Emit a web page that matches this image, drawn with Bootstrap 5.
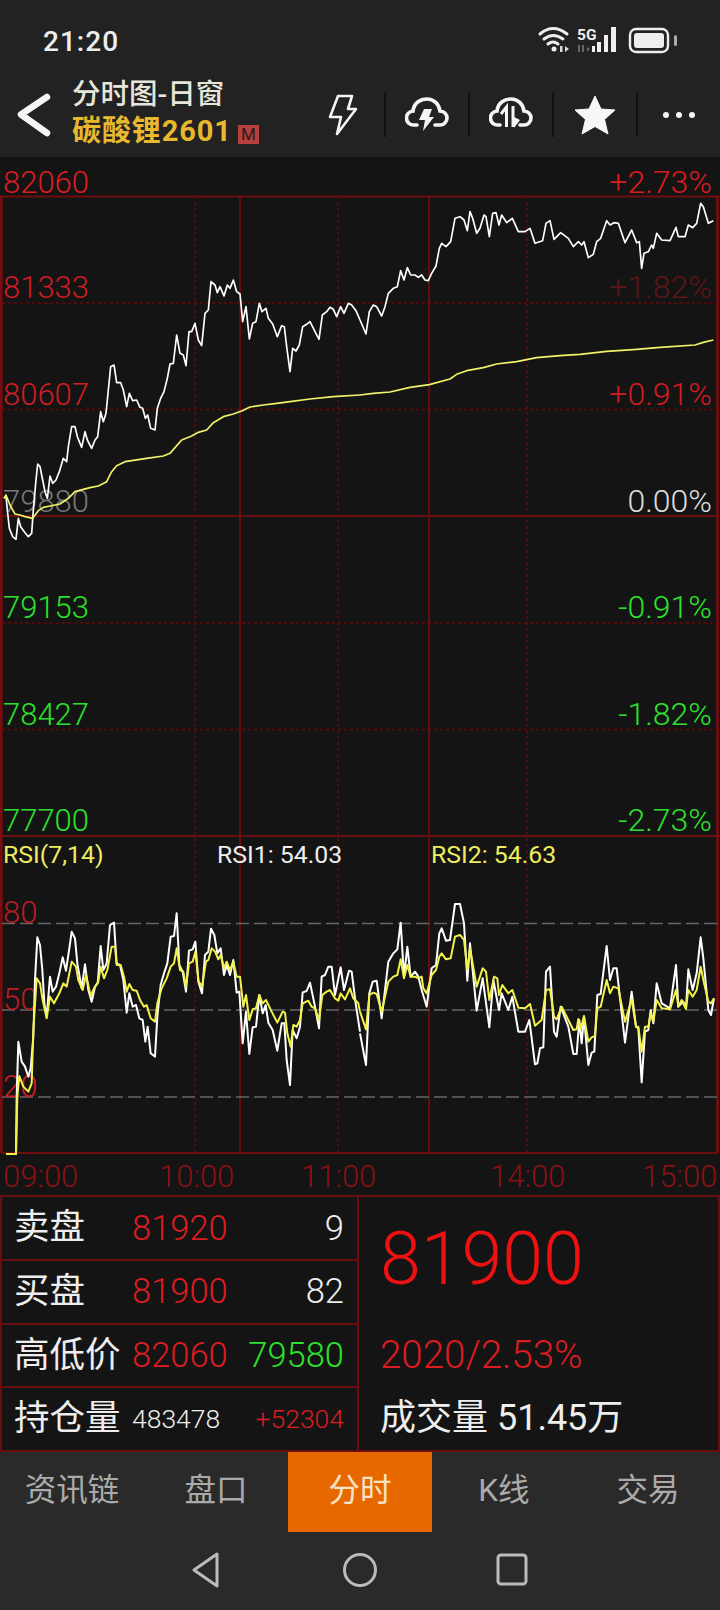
<!doctype html>
<html lang="zh">
<head>
<meta charset="utf-8">
<title>分时图</title>
<link href="https://cdn.jsdelivr.net/npm/bootstrap@5.3.0/dist/css/bootstrap.min.css" rel="stylesheet">
<style>
body{background:#222;width:720px;height:1610px;overflow:hidden;font-family:Roboto,"Noto Sans CJK SC",sans-serif;color:#eee}
.status-strip{height:72px;background:#222;padding:0 40px 0 43px}
.clock{font-size:28px;font-weight:500;letter-spacing:1px;color:#eee;margin-top:12px}
.head-strip{height:85px;background:#222}
.back-box{width:72px}
.title-one{font-size:28.5px;line-height:36px;color:#e6e6dc;font-weight:500;white-space:nowrap}
.title-two{font-size:29px;line-height:36px;color:#e8b92e;font-weight:700;white-space:nowrap;letter-spacing:.9px}
.mkt-tag{display:inline-block;width:21px;height:19px;background:#b5403f;color:#2a1a1a;font-size:17px;line-height:19px;text-align:center;font-weight:400;margin-left:6px;vertical-align:1px;letter-spacing:0}
.tool-cell{width:84px;height:45px}
.tool-end{width:82px}
.tool-sep{border-right:2px solid #111}
.chart-box{display:block;background:#141414}
.lbl{font-family:Roboto,sans-serif;font-size:31px;font-weight:350}
.lbl-r{font-size:32px}
.lbl-s{font-family:Roboto,sans-serif;font-size:24.8px;font-weight:400}
.quote{height:257px;background:#141414;border:2px solid #6b0d0f}
.quote-left{width:357px;border-right:2px solid #6b0d0f}
.q-row{flex:1 1 0;padding:0 13px 0 12px;border-bottom:2px solid #6b0d0f}
.q-row:last-child{border-bottom:0}
.q-name{width:118px;font-size:35.5px;line-height:1;color:#eee;white-space:nowrap;font-weight:400}
.q-num{font-size:34.5px;font-weight:350;line-height:1}
.q-tiny{font-size:26.5px;font-weight:350;line-height:1}
.tone-up{color:#dc1c20}
.tone-down{color:#2de02d}
.tone-plain{color:#eee}
.quote-right{padding-left:21px}
.big-row{height:127px}
.big-price{font-size:73.5px;line-height:1;color:#ee1111;font-weight:350}
.mid-row{height:64px}
.mid-change{font-size:38.5px;line-height:1;color:#dc1c20;font-weight:350}
.mid-vol{font-size:36px;line-height:1;color:#eee;font-weight:400}
.tab-strip{height:80px;background:#2a2a2a}
.tab-cell{width:144px;font-size:31.5px;color:#aaa;padding-bottom:3px}
.tab-on{background:#e86800;color:#f6e3c6}
.sys-strip{height:78px;background:#2a2a2a;padding-bottom:2px}
.sys-cell{width:154px}
.sys-square{margin-right:4px}
</style>
</head>
<body>
<div class="d-flex flex-column">
  <div class="status-strip d-flex align-items-center justify-content-between">
    <div class="clock">21:20</div>
    <svg width="150" height="40" viewBox="530 22 150 40" class="mt-2" aria-hidden="true">
      <g fill="none" stroke="#eee" stroke-width="3" stroke-linecap="round">
        <path d="M540,36 Q553,25 567,36"/><path d="M544,41 Q553,34 563,41"/><path d="M548,46 Q553,42 558,46"/>
      </g>
      <circle cx="554" cy="51" r="2.5" fill="#eee"/>
      <path d="M560,48h2.5v6H560zM565,48l4,3-4,3z" fill="#ddd"/>
      <text x="577" y="42" fill="#eee" style="font:700 15.5px Roboto,sans-serif">5G</text>
      <path d="M578,47h2v7h-2zM582,47h2v7h-2zM587,49l3,2-3,3z" fill="#666"/>
      <path d="M592,48h3v6h-3zM597,44h4v10h-4zM604,37h4v17h-4zM611,29h5v25h-5z" fill="#eee"/>
      <rect x="630" y="31" width="38" height="23" rx="6" fill="none" stroke="#eee" stroke-width="2.4"/>
      <rect x="634" y="35" width="30" height="15" rx="3" fill="#eee"/>
      <rect x="674" y="37" width="3" height="11" rx="1.5" fill="#aaa"/>
    </svg>
  </div>

  <div class="head-strip d-flex align-items-center">
    <div class="back-box d-flex justify-content-center">
      <svg width="40" height="46" viewBox="0 0 40 46" class="me-1" aria-hidden="true"><path d="M33,5 L7,22.5 L33,41" fill="none" stroke="#f5f5f5" stroke-width="6.5" stroke-linecap="round" stroke-linejoin="round"/></svg>
    </div>
    <div class="flex-grow-1 mb-1">
      <div class="title-one">分时图-日窗</div>
      <div class="title-two">碳酸锂2601<span class="mkt-tag">M</span></div>
    </div>
    <div class="d-flex align-items-center">
      <div class="tool-cell tool-sep d-flex align-items-center justify-content-center">
        <svg width="30" height="42" viewBox="0 0 30 42" aria-hidden="true"><path d="M10,2 H24 L20,15 H28 L9,40 L13,23 H2 Z" fill="none" stroke="#f5f5f5" stroke-width="2.6" stroke-linejoin="round"/></svg>
      </div>
      <div class="tool-cell tool-sep d-flex align-items-center justify-content-center">
        <svg width="44" height="38" viewBox="0 0 44 38" aria-hidden="true"><path d="M12,29 H9 a7,7 0 0 1 -1,-14 C9,7 15,3 22,3 C29,3 34,8 35,15 a7,7 0 0 1 0,14 H30" fill="none" stroke="#f5f5f5" stroke-width="3.6" stroke-linecap="round"/><path d="M19,13 H27 L24,21 H29 L18,35 L20,24 H14 Z" fill="#f5f5f5"/></svg>
      </div>
      <div class="tool-cell tool-sep d-flex align-items-center justify-content-center">
        <svg width="44" height="38" viewBox="0 0 44 38" aria-hidden="true"><path d="M11,29 H9 a7,7 0 0 1 -1,-14 C9,7 15,3 22,3 C29,3 34,8 35,15 a7,7 0 0 1 0,14 H31" fill="none" stroke="#f5f5f5" stroke-width="3.6" stroke-linecap="round"/><path d="M17.5,31 V11 L12,18 M24,10 V31" fill="none" stroke="#f5f5f5" stroke-width="3"/><path d="M25,21 L31,24 L25,32 Z" fill="#f5f5f5"/></svg>
      </div>
      <div class="tool-cell tool-sep d-flex align-items-center justify-content-center">
        <svg width="44" height="42" viewBox="0 0 44 42" aria-hidden="true"><path d="M22,2 L28,15 L42,16 L31.5,25.5 L35,40 L22,32.5 L9,40 L12.5,25.5 L2,16 L16,15 Z" fill="#f7f7f7" stroke="#f7f7f7" stroke-linejoin="round"/></svg>
      </div>
      <div class="tool-cell tool-end d-flex align-items-center justify-content-center gap-2">
        <svg width="34" height="8" viewBox="0 0 34 8" aria-hidden="true"><circle cx="4" cy="4" r="3" fill="#f5f5f5"/><circle cx="17" cy="4" r="3" fill="#f5f5f5"/><circle cx="30" cy="4" r="3" fill="#f5f5f5"/></svg>
      </div>
    </div>
  </div>

  <svg class="chart-box" width="720" height="1038" viewBox="0 157 720 1038" role="img" aria-label="分时图">
    <g stroke="#5c0c0e" stroke-width="1.5" stroke-dasharray="3 3" fill="none">
      <path d="M2,303H717M2,409.5H717M2,623H717M2,729.5H717M195,196V1153M338,196V1153M527,196V1153"/>
    </g>
    <g stroke="#6f0c0f" stroke-width="1.8" fill="none">
      <path d="M0,196.5H720M2,516H717M0,836H720M2,1153H717M240,196V1153M429,196V1153"/>
    </g>
    <path d="M1.3,196V1153M717.5,196V1153" stroke="#7a0c10" stroke-width="2.6" fill="none"/>
    <path d="M2,923.5H717M2,1010H717M2,1097H717" stroke="#666" stroke-width="1.4" stroke-dasharray="13 5" fill="none"/>

    <g class="lbl">
      <text x="3" y="193" fill="#dc1c20">82060</text>
      <text x="3" y="298" fill="#d01c22">81333</text>
      <text x="3" y="405" fill="#d01c22">80607</text>
      <text x="3" y="512" fill="#777">79880</text>
      <text x="3" y="618" fill="#2de02d">79153</text>
      <text x="3" y="725" fill="#2de02d">78427</text>
      <text x="3" y="831" fill="#2de02d">77700</text>
      <g text-anchor="end" class="lbl-r">
        <text x="712" y="193" fill="#dc1c20">+2.73%</text>
        <text x="712" y="298" fill="#5e1518">+1.82%</text>
        <text x="712" y="405" fill="#d01c22">+0.91%</text>
        <text x="712" y="512" fill="#ddd">0.00%</text>
        <text x="712" y="618" fill="#2de02d">-0.91%</text>
        <text x="712" y="725" fill="#2de02d">-1.82%</text>
        <text x="712" y="831" fill="#2de02d">-2.73%</text>
      </g>
      <text x="3" y="923" fill="#b81c22">80</text>
      <text x="3" y="1010" fill="#b81c22">50</text>
      <text x="3" y="1097" fill="#d01c22">20</text>
      <g fill="#8a1113">
        <text x="3" y="1187">09:00</text>
        <text x="159" y="1187">10:00</text>
        <text x="301" y="1187">11:00</text>
        <text x="490" y="1187">14:00</text>
        <text x="642" y="1187">15:00</text>
      </g>
    </g>
    <g class="lbl-s">
      <text x="3" y="863" fill="#eded60">RSI(7,14)</text>
      <text x="217" y="863" fill="#eee">RSI1: 54.03</text>
      <text x="431" y="863" fill="#eded60">RSI2: 54.63</text>
    </g>

    <g transform="translate(0 190) scale(.33333)" fill="none" stroke-linejoin="round">
      <polyline stroke="#fff" stroke-width="5" points="12,925 18,918 22,960 28,1015 38,1040 48,1048 55,985 62,1010 75,1028 85,1040 95,1030 100,960 108,870 113,822 120,830 128,870 135,905 142,925 150,858 158,880 168,870 178,845 190,805 200,815 205,770 215,710 225,710 232,740 245,772 255,725 262,750 275,775 285,750 293,740 302,665 310,695 318,670 326,590 332,530 342,525 350,578 362,578 370,600 380,650 388,610 398,632 410,630 420,652 428,655 436,685 443,675 452,715 465,720 472,655 482,625 492,605 502,565 510,522 520,520 530,435 540,490 550,495 558,527 567,425 575,425 585,400 595,450 605,467 615,370 625,360 633,275 645,285 652,308 660,290 672,318 682,285 690,295 700,270 710,305 720,312 728,395 738,350 748,447 758,400 768,395 778,340 786,365 798,355 805,385 818,402 832,440 845,407 853,410 860,470 870,545 878,475 888,483 898,465 908,410 920,403 930,395 945,425 957,448 967,375 980,365 990,352 1000,358 1010,380 1022,350 1032,370 1045,340 1055,345 1068,362 1080,390"/>
      <polyline stroke="#f2f26a" stroke-width="5" points="12,925 18,915 30,945 45,972 60,975 75,980 98,985 115,962 130,952 150,948 180,942 205,925 225,905 250,898 270,893 295,888 320,875 335,845 350,827 375,815 400,811 440,805 490,798 510,790 525,773 545,750 575,738 595,727 620,720 640,698 670,680 700,672 725,663 750,651 790,645 830,640 870,635 930,627 1000,620 1080,615"/>
    </g>
    <g transform="translate(360 190) scale(.33333)" fill="none" stroke-linejoin="round">
      <polyline stroke="#fff" stroke-width="5" points="0,390 18,432 28,365 40,345 50,350 65,378 75,350 85,310 100,295 112,290 122,242 132,270 142,233 152,255 165,255 175,262 185,255 195,270 205,272 215,250 228,228 238,175 245,160 258,170 272,155 285,85 300,80 312,90 322,122 330,65 338,85 350,130 360,115 372,75 378,80 388,140 398,70 408,68 417,105 425,75 440,98 457,85 475,125 495,125 510,115 525,160 548,152 558,100 570,92 582,148 602,128 625,145 640,170 655,155 665,165 672,155 685,203 700,193 710,155 722,145 740,92 750,105 762,98 775,100 795,158 815,120 830,158 838,155 845,235 852,190 865,185 875,165 880,175 890,130 905,150 930,152 948,112 955,140 975,140 985,105 998,113 1010,100 1022,40 1030,50 1045,100 1060,92"/>
      <polyline stroke="#f2f26a" stroke-width="5" points="0,615 40,610 90,606 150,592 208,584 270,567 290,553 320,542 370,533 410,522 470,515 530,503 600,497 660,493 740,484 830,478 900,472 1005,465 1030,457 1060,450"/>
    </g>
    <g transform="translate(0 830) scale(.33333)" fill="none" stroke-linejoin="round">
      <polyline stroke="#fff" stroke-width="6" points="18,972 48,972 50,800 55,635 65,695 75,710 85,740 92,715 100,620 105,450 112,322 120,345 127,420 133,520 140,560 150,440 158,485 168,470 178,430 188,382 198,422 208,355 215,305 225,325 232,400 245,475 255,403 265,480 275,515 285,470 293,460 302,348 310,420 320,400 330,285 342,278 350,400 360,405 370,450 380,548 388,490 398,530 408,525 418,565 428,570 436,635 443,590 452,670 465,680 472,560 482,465 492,430 502,400 512,320 522,318 530,250 538,405 548,425 558,485 567,362 578,358 586,335 595,455 606,490 615,375 625,365 633,296 643,315 652,370 662,355 672,435 680,405 690,435 700,390 710,488 718,485 728,640 738,545 748,672 758,592 768,590 778,495 788,550 797,525 805,578 818,600 832,662 845,580 853,580 860,690 870,765 878,600 890,625 900,590 908,487 920,483 930,458 945,530 957,595 965,440 975,435 985,410 995,410 1005,495 1022,412 1032,480 1047,422 1055,425 1067,520 1080,605"/>
      <polyline stroke="#f2f24a" stroke-width="6" points="18,972 48,972 52,800 58,738 70,770 85,785 95,760 100,600 110,445 120,460 128,510 140,565 150,500 162,520 178,490 190,460 200,470 215,395 228,410 235,450 248,480 258,435 272,498 282,475 295,455 302,410 312,445 322,420 335,350 345,350 350,405 362,405 372,440 380,485 388,462 398,480 410,482 420,510 432,530 440,525 452,565 465,575 472,520 485,475 500,445 512,410 522,400 530,355 540,420 550,425 558,470 567,400 578,395 586,365 596,455 606,470 618,395 625,390 635,355 645,365 655,388 662,375 672,415 680,395 690,420 700,395 710,440 720,440 730,530 738,495 748,570 758,538 768,535 778,495 788,520 798,510 815,545 832,578 848,545 855,548 862,610 872,650 880,585 890,590 900,570 908,520 925,512 935,530 945,535 957,570 967,495 980,485 990,480 1005,505 1015,512 1022,490 1035,508 1050,475 1060,505 1075,520 1080,545"/>
    </g>
    <g transform="translate(360 830) scale(.33333)" fill="none" stroke-linejoin="round">
      <polyline stroke="#fff" stroke-width="6" points="0,610 18,705 28,490 38,455 50,452 65,565 85,395 100,370 112,358 122,278 132,440 142,350 152,440 165,425 175,440 185,480 200,530 215,415 228,405 238,310 245,295 258,332 270,330 285,222 300,222 312,280 322,452 330,340 350,542 368,445 388,592 400,450 417,540 425,490 445,540 457,500 475,605 495,605 508,570 525,703 532,700 540,655 550,652 558,425 570,410 582,605 590,620 602,530 625,590 640,672 650,672 658,570 665,640 672,560 685,705 695,668 703,665 712,495 722,492 740,348 750,450 760,415 770,415 795,638 815,485 828,590 835,595 845,757 855,605 865,600 872,540 880,580 890,460 905,520 930,535 948,405 955,530 970,515 978,535 985,418 998,480 1010,430 1022,322 1030,385 1045,540 1053,555 1062,505"/>
      <polyline stroke="#f2f24a" stroke-width="6" points="0,545 18,598 28,495 40,488 50,492 65,545 85,455 100,440 112,435 122,388 132,445 142,405 152,440 165,440 175,445 185,440 190,475 200,490 215,435 228,420 238,380 245,370 258,388 272,385 285,320 300,315 312,330 322,420 330,355 350,470 368,415 378,425 388,510 402,440 412,445 417,495 427,465 445,490 457,480 475,533 495,535 510,522 525,587 545,570 558,480 570,478 582,560 590,568 605,530 625,570 640,600 650,598 655,567 662,598 672,558 685,635 695,622 705,618 712,535 722,530 740,450 750,490 760,470 775,475 795,575 815,508 828,590 835,590 845,665 855,590 865,590 872,550 880,575 890,510 905,535 930,538 948,480 955,530 965,510 978,537 985,480 998,500 1010,480 1022,410 1030,450 1045,515 1053,520 1062,505"/>
    </g>
  </svg>

  <div class="quote d-flex">
    <div class="quote-left d-flex flex-column">
      <div class="q-row d-flex align-items-center">
        <div class="q-name">卖盘</div><div class="q-num tone-up">81920</div><div class="q-num tone-plain ms-auto">9</div>
      </div>
      <div class="q-row d-flex align-items-center">
        <div class="q-name">买盘</div><div class="q-num tone-up">81900</div><div class="q-num tone-plain ms-auto">82</div>
      </div>
      <div class="q-row d-flex align-items-center">
        <div class="q-name">高低价</div><div class="q-num tone-up">82060</div><div class="q-num tone-down ms-auto">79580</div>
      </div>
      <div class="q-row d-flex align-items-center">
        <div class="q-name">持仓量</div><div class="q-tiny tone-plain">483478</div><div class="q-tiny tone-up ms-auto">+52304</div>
      </div>
    </div>
    <div class="quote-right flex-grow-1 d-flex flex-column">
      <div class="big-row d-flex align-items-center"><div class="big-price">81900</div></div>
      <div class="mid-row d-flex align-items-center"><div class="mid-change">2020/2.53%</div></div>
      <div class="mid-row d-flex align-items-center"><div class="mid-vol">成交量 51.45万</div></div>
    </div>
  </div>

  <div class="tab-strip d-flex">
    <div class="tab-cell d-flex align-items-center justify-content-center">资讯链</div>
    <div class="tab-cell d-flex align-items-center justify-content-center">盘口</div>
    <div class="tab-cell tab-on d-flex align-items-center justify-content-center">分时</div>
    <div class="tab-cell d-flex align-items-center justify-content-center">K线</div>
    <div class="tab-cell d-flex align-items-center justify-content-center">交易</div>
  </div>

  <div class="sys-strip d-flex align-items-center justify-content-center">
    <div class="sys-cell d-flex justify-content-center">
      <svg width="32" height="36" viewBox="0 0 32 36" aria-hidden="true"><path d="M27,2 L4,18 L27,34 Z" fill="none" stroke="#bbb" stroke-width="3" stroke-linejoin="round"/></svg>
    </div>
    <div class="sys-cell d-flex justify-content-center">
      <svg width="36" height="36" viewBox="0 0 36 36" aria-hidden="true"><circle cx="18" cy="18" r="15.5" fill="none" stroke="#bbb" stroke-width="3"/></svg>
    </div>
    <div class="sys-cell d-flex justify-content-center">
      <svg class="sys-square" width="32" height="36" viewBox="0 0 32 36" aria-hidden="true"><rect x="2" y="3" width="28" height="29" rx="3" fill="none" stroke="#bbb" stroke-width="3"/></svg>
    </div>
  </div>
</div>
<script src="https://cdn.jsdelivr.net/npm/bootstrap@5.3.0/dist/js/bootstrap.bundle.min.js"></script>
</body>
</html>
